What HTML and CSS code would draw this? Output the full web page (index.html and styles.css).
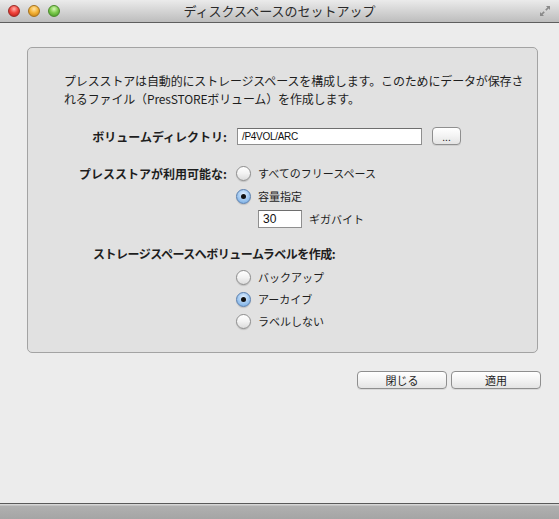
FILE: index.html
```html
<!DOCTYPE html>
<html lang="ja">
<head>
<meta charset="utf-8">
<title>ディスクスペースのセットアップ</title>
<link rel="stylesheet" href="styles.css">
</head>
<body>
<div class="window">
  <div class="titlebar">
    <div class="lights">
      <span class="light red"></span>
      <span class="light yellow"></span>
      <span class="light green"></span>
    </div>
    <div class="title">ディスクスペースのセットアップ</div>
    <svg class="resize" width="12" height="12" viewBox="0 0 12 12">
      <path d="M7 1 H11 V5 L9.6 3.6 L7.4 5.8 L6.2 4.6 L8.4 2.4 Z" fill="#8a8a8a"/>
      <path d="M5 11 H1 V7 L2.4 8.4 L4.6 6.2 L5.8 7.4 L3.6 9.6 Z" fill="#8a8a8a"/>
    </svg>
  </div>
  <div class="content">
    <div class="panel">
      <p class="desc">プレスストアは自動的にストレージスペースを構成します。このためにデータが保存さ<br>れるファイル（PresSTOREボリューム）を作成します。</p>
      <div class="row row-a">
        <div class="label">ボリュームディレクトリ:</div>
        <div class="field path">/P4VOL/ARC</div>
        <div class="btn small">...</div>
      </div>
      <div class="row row-b">
        <div class="label">プレスストアが利用可能な:</div>
        <span class="radio"></span><span class="opt">すべてのフリースペース</span>
      </div>
      <div class="row row-c indent">
        <span class="radio on"></span><span class="opt">容量指定</span>
      </div>
      <div class="row row-d indent2">
        <div class="field num">30</div><span class="unit">ギガバイト</span>
      </div>
      <div class="row heading">ストレージスペースへボリュームラベルを作成:</div>
      <div class="row row-e indent">
        <span class="radio"></span><span class="opt">バックアップ</span>
      </div>
      <div class="row row-f indent">
        <span class="radio on"></span><span class="opt">アーカイブ</span>
      </div>
      <div class="row row-f indent">
        <span class="radio"></span><span class="opt">ラベルしない</span>
      </div>
    </div>
    <div class="actions">
      <div class="btn wide">閉じる</div>
      <div class="btn wide">適用</div>
    </div>
  </div>
  <div class="bottombar"></div>
</div>
</body>
</html>
```

FILE: styles.css
```css
html, body {
  margin: 0;
  padding: 0;
}
body {
  width: 559px;
  height: 519px;
  overflow: hidden;
  font-family: "Noto Sans CJK JP", "Noto Sans", sans-serif;
  font-size: 12px;
  color: #1e1e1e;
  background: #ececec;
}
.window {
  display: flex;
  flex-direction: column;
  height: 519px;
}
.titlebar {
  position: relative;
  height: 22px;
  flex: none;
  border-bottom: 1px solid #5e5e5e;
  background: linear-gradient(#ebebeb, #d4d4d4 50%, #bdbdbd);
  display: flex;
  align-items: center;
  justify-content: center;
}
.lights {
  position: absolute;
  left: 8px;
  top: 5px;
  display: flex;
  gap: 8px;
}
.light {
  width: 12px;
  height: 12px;
  border-radius: 50%;
  box-sizing: border-box;
}
.red {
  background: radial-gradient(circle at 50% 30%, #ffb3ad 0, #f2473f 45%, #b5150e 100%);
  border: 1px solid #9a2a25;
}
.yellow {
  background: radial-gradient(circle at 50% 30%, #ffe4a8 0, #f5b53a 45%, #c0770a 100%);
  border: 1px solid #a5721e;
}
.green {
  background: radial-gradient(circle at 50% 30%, #d8f7b9 0, #7fcc4f 45%, #3c8f1d 100%);
  border: 1px solid #4b8a2c;
}
.title {
  font-size: 13px;
  color: #2a2a2a;
  line-height: 22px;
}
.resize {
  position: absolute;
  right: 8px;
  top: 5px;
}
.content {
  flex: 1;
  display: flex;
  flex-direction: column;
  padding: 24px 18px 0 27px;
}
.panel {
  width: 511px;
  height: 306px;
  box-sizing: border-box;
  border: 1px solid #a3a3a3;
  border-radius: 5px;
  background: #e1e1e1;
  padding: 24px 0 0 36px;
}
.desc {
  margin: 0;
  line-height: 18px;
  font-size: 12px;
  white-space: nowrap;
  letter-spacing: -0.15px;
}
.row {
  display: flex;
  align-items: center;
  height: 20px;
}
.label {
  width: 163px;
  margin-right: 9px;
  text-align: right;
  font-weight: bold;
  white-space: nowrap;
}
.row-a { margin-top: 18px; }
.row-b { margin-top: 17px; }
.row-c { margin-top: 3px; }
.row-d { margin-top: 3px; }
.heading {
  margin-top: 14px;
  margin-left: 29px;
  font-weight: bold;
  letter-spacing: -0.5px;
}
.row-e { margin-top: 4px; }
.row-f { margin-top: 2px; }
.indent { padding-left: 172px; }
.indent2 { padding-left: 194px; }
.field {
  box-sizing: border-box;
  background: #fff;
  border: 1px solid #8f8f8f;
  border-top-color: #6e6e6e;
  display: flex;
  align-items: center;
}
.path {
  width: 185px;
  height: 17px;
  margin-left: 1px;
  padding-left: 4px;
  font-family: "Liberation Sans", sans-serif;
  font-size: 10px;
  letter-spacing: -0.3px;
  color: #111;
}
.num {
  width: 44px;
  height: 18px;
  padding-left: 4px;
  font-family: "Liberation Sans", sans-serif;
  font-size: 12px;
  color: #111;
}
.unit {
  margin-left: 7px;
  font-size: 11px;
}
.radio {
  width: 15px;
  height: 15px;
  box-sizing: border-box;
  border-radius: 50%;
  border: 1px solid #8d8d8d;
  background: linear-gradient(#ffffff, #f2f2f2 50%, #dcdcdc);
  box-shadow: 0 1px 1px rgba(0,0,0,0.15);
  display: flex;
  align-items: center;
  justify-content: center;
  flex: none;
}
.radio.on {
  border-color: #5a7fae;
  background: radial-gradient(circle at 50% 35%, #e8f3ff 0, #a9cdf2 45%, #6aa3de 100%);
}
.radio.on::after {
  content: "";
  width: 5px;
  height: 5px;
  border-radius: 50%;
  background: #111;
}
.opt {
  margin-left: 7px;
  font-size: 11px;
}
.btn {
  box-sizing: border-box;
  border: 1px solid #8f8f8f;
  border-radius: 4px;
  background: linear-gradient(#ffffff, #f3f3f3 50%, #e4e4e4);
  box-shadow: 0 1px 0 rgba(0,0,0,0.08);
  display: flex;
  align-items: center;
  justify-content: center;
  color: #1e1e1e;
}
.small {
  width: 29px;
  height: 18px;
  margin-left: 10px;
  font-size: 10px;
  line-height: 1;
  padding-top: 2px;
}
.actions {
  display: flex;
  justify-content: flex-end;
  gap: 4px;
  margin-top: 18px;
}
.wide {
  width: 90px;
  height: 18px;
  font-size: 11px;
}
.bottombar {
  flex: none;
  height: 15px;
  border-top: 1px solid #5a5a5a;
  background: linear-gradient(#d6d6d6 0, #d6d6d6 1px, #b0b0b0 2px, #a5a5a5);
}
```
